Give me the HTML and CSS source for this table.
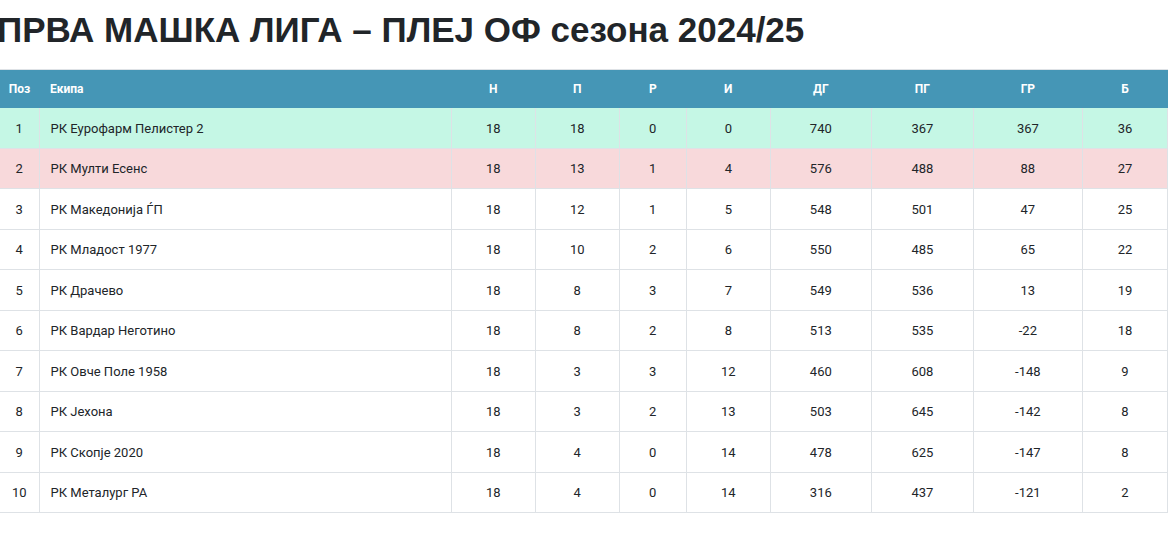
FILE: index.html
```html
<!DOCTYPE html>
<html lang="mk">
<head>
<meta charset="utf-8">
<title>Табела</title>
<link rel="stylesheet" href="styles.css">
</head>
<body>
<h1 class="title">ПРВА МАШКА ЛИГА – ПЛЕЈ ОФ сезона 2024/25</h1>
<table class="standings">
<colgroup>
<col class="c-pos"><col class="c-team"><col class="c-n"><col class="c-n"><col class="c-r"><col class="c-n"><col class="c-dg"><col class="c-pg"><col class="c-gr"><col class="c-b">
</colgroup>
<thead>
<tr><th>Поз</th><th class="left">Екипа</th><th>Н</th><th>П</th><th>Р</th><th>И</th><th>ДГ</th><th>ПГ</th><th>ГР</th><th>Б</th></tr>
</thead>
<tbody>
<tr class="win"><td>1</td><td class="left">РК Еурофарм Пелистер 2</td><td>18</td><td>18</td><td>0</td><td>0</td><td>740</td><td>367</td><td>367</td><td>36</td></tr>
<tr class="lose"><td>2</td><td class="left">РК Мулти Есенс</td><td>18</td><td>13</td><td>1</td><td>4</td><td>576</td><td>488</td><td>88</td><td>27</td></tr>
<tr><td>3</td><td class="left">РК Македонија ЃП</td><td>18</td><td>12</td><td>1</td><td>5</td><td>548</td><td>501</td><td>47</td><td>25</td></tr>
<tr><td>4</td><td class="left">РК Младост 1977</td><td>18</td><td>10</td><td>2</td><td>6</td><td>550</td><td>485</td><td>65</td><td>22</td></tr>
<tr><td>5</td><td class="left">РК Драчево</td><td>18</td><td>8</td><td>3</td><td>7</td><td>549</td><td>536</td><td>13</td><td>19</td></tr>
<tr><td>6</td><td class="left">РК Вардар Неготино</td><td>18</td><td>8</td><td>2</td><td>8</td><td>513</td><td>535</td><td>-22</td><td>18</td></tr>
<tr><td>7</td><td class="left">РК Овче Поле 1958</td><td>18</td><td>3</td><td>3</td><td>12</td><td>460</td><td>608</td><td>-148</td><td>9</td></tr>
<tr><td>8</td><td class="left">РК Јехона</td><td>18</td><td>3</td><td>2</td><td>13</td><td>503</td><td>645</td><td>-142</td><td>8</td></tr>
<tr><td>9</td><td class="left">РК Скопје 2020</td><td>18</td><td>4</td><td>0</td><td>14</td><td>478</td><td>625</td><td>-147</td><td>8</td></tr>
<tr><td>10</td><td class="left">РК Металург РА</td><td>18</td><td>4</td><td>0</td><td>14</td><td>316</td><td>437</td><td>-121</td><td>2</td></tr>
</tbody>
</table>
</body>
</html>
```
FILE: styles.css
```css
html, body {
  margin: 0;
  padding: 0;
  background: #fff;
}
body {
  font-family: Roboto, "Noto Sans", sans-serif;
  color: #212529;
}
.title {
  font-family: "Liberation Sans", Arial, sans-serif;
  font-weight: 700;
  font-size: 35px;
  line-height: 40px;
  margin: 10px 0 19px -3px;
  color: #212529;
  white-space: nowrap;
}
.standings {
  border-collapse: collapse;
  table-layout: fixed;
  width: 1168px;
  border-top: 1px solid #dee2e6;
  font-size: 13px;
}
.c-pos { width: 39px; }
.c-team { width: 412px; }
.c-n { width: 84px; }
.c-r { width: 67px; }
.c-dg { width: 101px; }
.c-pg { width: 102px; }
.c-gr { width: 109px; }
.c-b { width: 85px; }
.standings th {
  background: #4596b6;
  color: #fff;
  font-weight: 700;
  font-size: 12px;
  line-height: 18px;
  padding: 10px 4px;
  text-align: center;
}
.standings td {
  line-height: 19.5px;
  padding: 10.5px 4px 9.5px;
  text-align: center;
  border-bottom: 1px solid #dee2e6;
  border-left: 1px solid #dee2e6;
}
.standings td:first-child { border-left: none; }
.standings td:last-child { border-right: 1px solid #dee2e6; }
.standings .left {
  text-align: left;
  padding-left: 11px;
}
.standings tr.win td { background: #c5f7e5; }
.standings tr.lose td { background: #f8d9db; }
```
